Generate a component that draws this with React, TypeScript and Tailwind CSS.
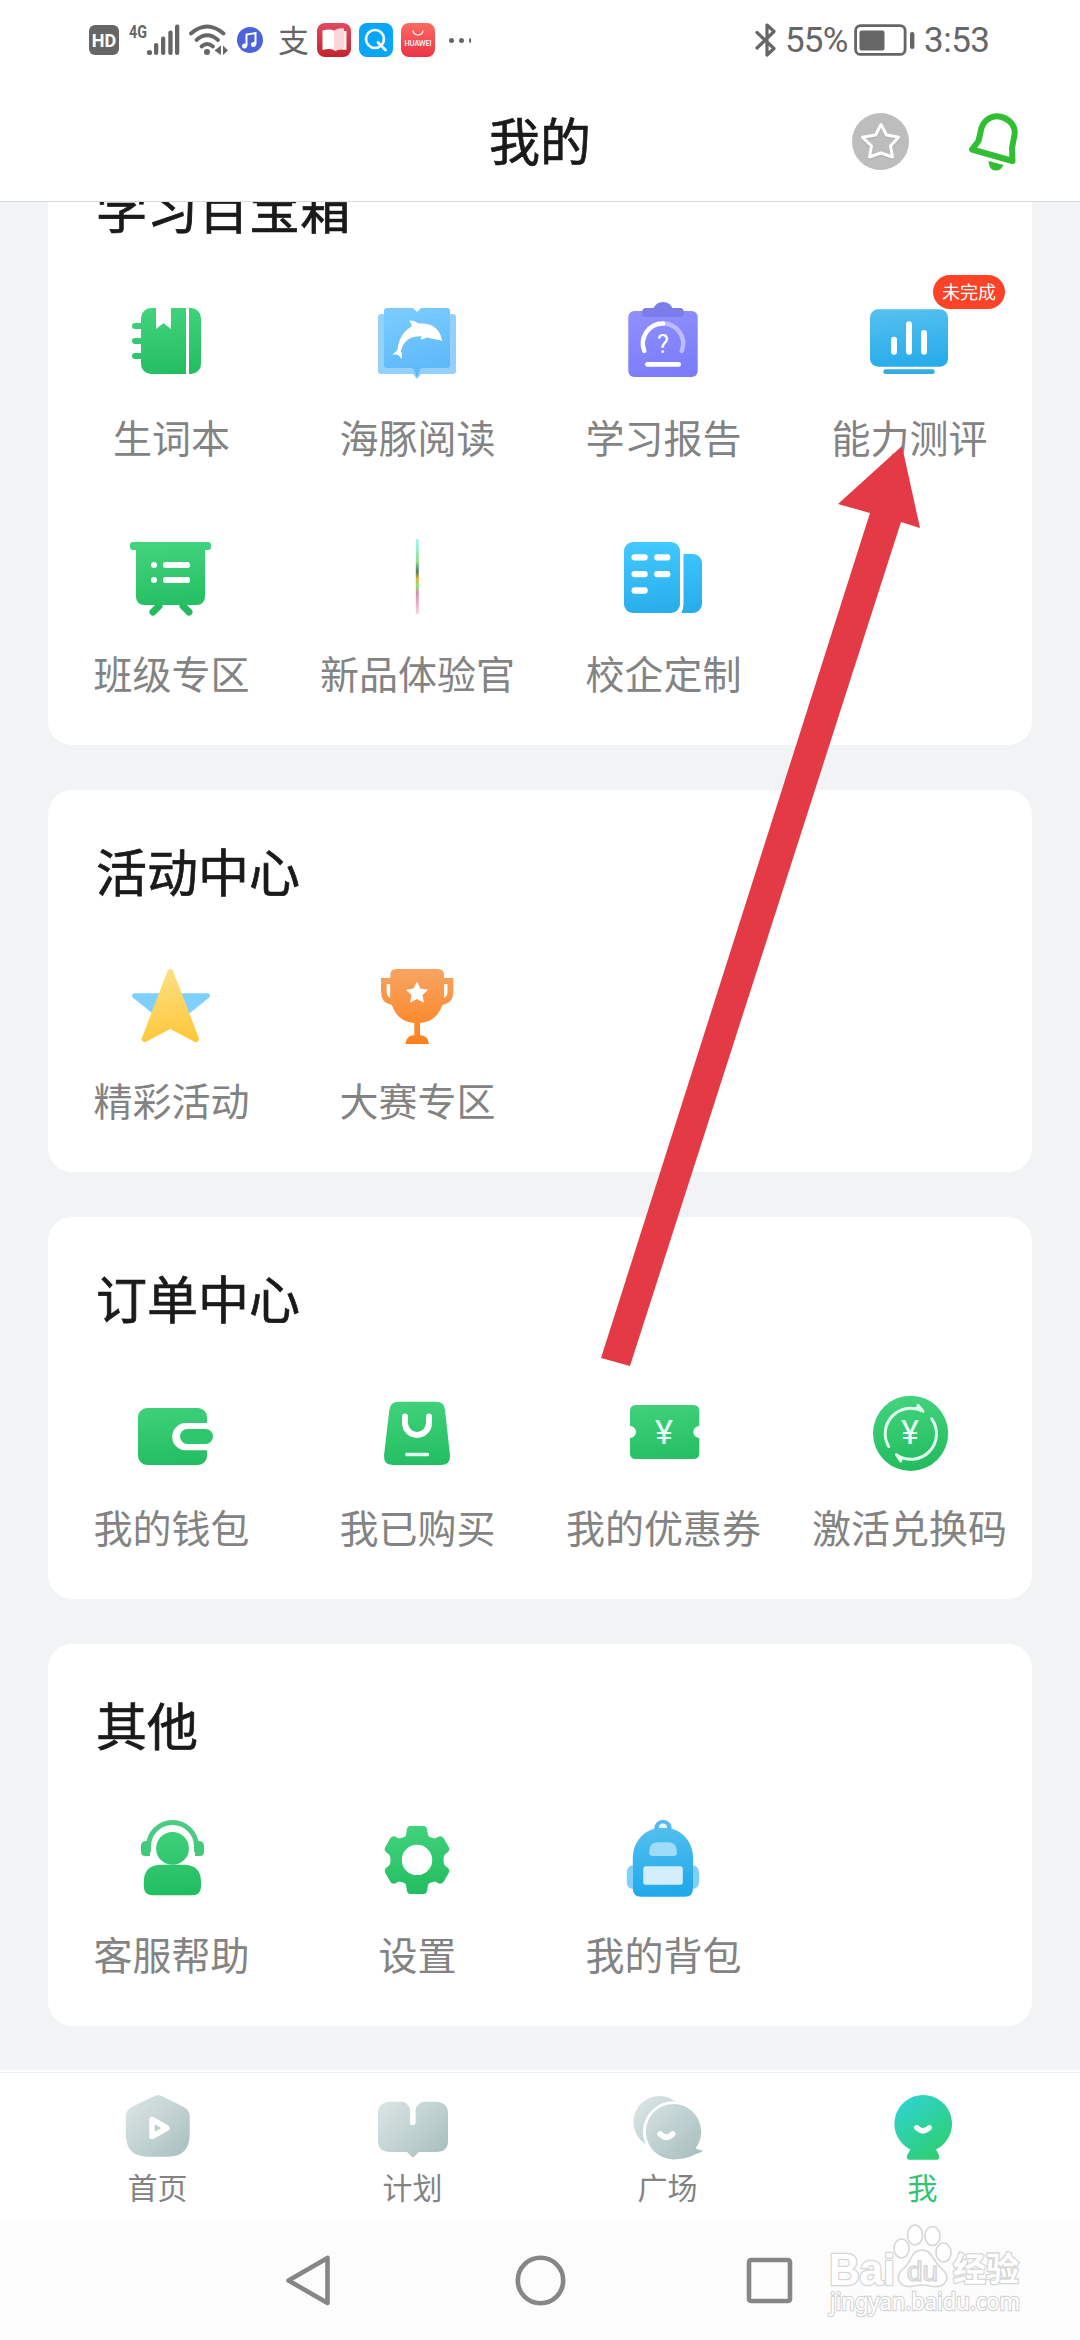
import type { ReactNode } from "react";

interface Item {
  label: string;
  icon: ReactNode;
  badge?: string;
}

const GREEN = "url(#green)";
const BLUE = "url(#blue)";
const MIST = "url(#mist)";

function Gradients() {
  return (
    <svg className="absolute w-0 h-0" aria-hidden="true">
      <defs>
        <linearGradient id="green" gradientUnits="userSpaceOnUse" x1="44" y1="12" x2="52" y2="84">
          <stop offset="0" stopColor="#42d37d" />
          <stop offset="1" stopColor="#22bc5f" />
        </linearGradient>
        <linearGradient id="blue" gradientUnits="userSpaceOnUse" x1="44" y1="12" x2="52" y2="80">
          <stop offset="0" stopColor="#54c0ef" />
          <stop offset="1" stopColor="#21a9ea" />
        </linearGradient>
        <linearGradient id="sky" gradientUnits="userSpaceOnUse" x1="44" y1="12" x2="50" y2="82">
          <stop offset="0" stopColor="#42c8ff" />
          <stop offset="1" stopColor="#28adea" />
        </linearGradient>
        <linearGradient id="page" gradientUnits="userSpaceOnUse" x1="40" y1="12" x2="56" y2="74">
          <stop offset="0" stopColor="#7accff" />
          <stop offset="1" stopColor="#5eb9fa" />
        </linearGradient>
        <linearGradient id="violet" gradientUnits="userSpaceOnUse" x1="40" y1="14" x2="56" y2="82">
          <stop offset="0" stopColor="#908fff" />
          <stop offset="1" stopColor="#7a7cf9" />
        </linearGradient>
        <linearGradient id="orange" gradientUnits="userSpaceOnUse" x1="48" y1="11" x2="48" y2="86">
          <stop offset="0" stopColor="#f6a462" />
          <stop offset="1" stopColor="#ff801b" />
        </linearGradient>
        <linearGradient id="yellow" gradientUnits="userSpaceOnUse" x1="40" y1="11" x2="52" y2="84">
          <stop offset="0" stopColor="#fbe184" />
          <stop offset="1" stopColor="#ffc63a" />
        </linearGradient>
        <linearGradient id="rainbow" x1="0" y1="0" x2="0" y2="1">
          <stop offset="0" stopColor="#a5f5f7" />
          <stop offset="0.3" stopColor="#8fe08f" />
          <stop offset="0.43" stopColor="#4d7a63" />
          <stop offset="0.54" stopColor="#e8b930" />
          <stop offset="0.62" stopColor="#86e66a" />
          <stop offset="0.72" stopColor="#d98aa5" />
          <stop offset="1" stopColor="#fbd3e0" />
        </linearGradient>
        <linearGradient id="mist" gradientUnits="userSpaceOnUse" x1="8" y1="8" x2="62" y2="62">
          <stop offset="0" stopColor="#dae4e4" />
          <stop offset="1" stopColor="#abc1c1" />
        </linearGradient>
        <linearGradient id="me" gradientUnits="userSpaceOnUse" x1="14" y1="12" x2="52" y2="60">
          <stop offset="0" stopColor="#2ed4cb" />
          <stop offset="1" stopColor="#2dcf75" />
        </linearGradient>
        <linearGradient id="reader" x1="0" y1="0" x2="0" y2="1">
          <stop offset="0" stopColor="#e04a5e" />
          <stop offset="1" stopColor="#c3242f" />
        </linearGradient>
        <linearGradient id="store" x1="0" y1="0" x2="0" y2="1">
          <stop offset="0" stopColor="#fb6a62" />
          <stop offset="1" stopColor="#ee3444" />
        </linearGradient>
      </defs>
    </svg>
  );
}

function Icon({ children }: { children: ReactNode }) {
  return (
    <svg className="w-24 h-24" viewBox="0 0 96 96" fill="none">
      {children}
    </svg>
  );
}

const toolItems: Item[] = [
  {
    label: "生词本",
    icon: (
      <Icon>
        <path fill={GREEN} d="M28 13H33V34L40.5 28.3L48 34V13H63V79H28A10 10 0 0 1 18 69V64H12A3 3 0 0 1 12 58H18V49H12A3 3 0 0 1 12 43H18V34H12A3 3 0 0 1 12 28H18V23A10 10 0 0 1 28 13Z" />
        <path fill={GREEN} d="M66 13H68A10 10 0 0 1 78 23V69A10 10 0 0 1 68 79H66Z" />
      </Icon>
    ),
  },
  {
    label: "海豚阅读",
    icon: (
      <Icon>
        <path fill="#95d0fd" d="M12 19H84A3 3 0 0 1 87 22V76A3 3 0 0 1 84 79H52L48 84L44 79H12A3 3 0 0 1 9 76V22A3 3 0 0 1 12 19Z" />
        <path fill="url(#page)" d="M18 13H44L48 17L52 13H78A3 3 0 0 1 81 16V70A3 3 0 0 1 78 73H54Q51 73 50.500 76L48 83L45.500 76Q45 73 42 73H18A3 3 0 0 1 15 70V16A3 3 0 0 1 18 13Z" />
        <path fill="#fff" d="M73 46C72 38 68 32 60 29.500C56 28.300 52 28.500 49 28.200C46 26 43 25.300 40.300 25.700C42 27.500 43 29 42.600 31.500C34 36 29.500 45 28.500 54.500C27 57 25 58 23 59.700C26 59.500 28 59.500 29.500 60.500C31 61.500 31.500 63 32.700 63.700C33.500 60.500 33 58.500 31.800 56.500C33 51 35.500 47 39 44.500C43 42 48 41 52.700 41.300L51.500 44.500C54.500 44.300 56.500 43.500 58 42.300C60 43 61 43.500 61.500 43.500C66 44.500 70 44 73 46Z" />
      </Icon>
    ),
  },
  {
    label: "学习报告",
    icon: (
      <Icon>
        <rect x="13.300" y="16" width="69.400" height="66" rx="6" fill="url(#violet)" />
        <path fill="#7c7cea" d="M31 13H38.500A10.500 10.500 0 0 1 57.500 13H65Q69 13 69 17.500T65 22H31Q27 22 27 17.500T31 13Z" />
        <path d="M66.700 56A20 20 0 0 0 48 28.600" stroke="#bcbcfe" strokeWidth="4.500" strokeLinecap="round" />
        <path d="M48 28.600A20 20 0 0 0 29.300 56" stroke="#fff" strokeWidth="4.500" strokeLinecap="round" />
        <text x="48" y="58" textAnchor="middle" fill="#fff" fontSize="25" fontFamily="Roboto, sans-serif">?</text>
        <rect x="30" y="67" width="36" height="4.800" rx="2.400" fill="#fff" />
      </Icon>
    ),
  },
  {
    label: "能力测评",
    badge: "未完成",
    icon: (
      <Icon>
        <rect x="9" y="14.300" width="78" height="57.400" rx="8" fill={BLUE} />
        <rect x="30" y="41.700" width="6" height="18" rx="3" fill="#fff" />
        <rect x="45" y="26.300" width="6" height="33.400" rx="3" fill="#fff" />
        <rect x="60" y="35" width="6" height="24.700" rx="3" fill="#fff" />
        <rect x="22.300" y="74.300" width="51.400" height="4.700" rx="2.300" fill="#35abe2" />
      </Icon>
    ),
  },
  {
    label: "班级专区",
    icon: (
      <Icon>
        <path d="M36 75L30 81M60 75L66 81" stroke="#22bc5f" strokeWidth="7" strokeLinecap="round" />
        <path fill={GREEN} d="M10 11H85A3 3 0 0 1 88 14V16A3 3 0 0 1 85 19H82V66A8 8 0 0 1 74 74H21A8 8 0 0 1 13 66V19H10A3 3 0 0 1 7 16V14A3 3 0 0 1 10 11Z" />
        <g fill="#fff">
          <rect x="28" y="31" width="6" height="6" rx="3" />
          <rect x="40" y="31" width="27" height="6" rx="2.500" />
          <rect x="28" y="46" width="6" height="6" rx="3" />
          <rect x="40" y="46" width="27" height="6" rx="2.500" />
        </g>
      </Icon>
    ),
  },
  {
    label: "新品体验官",
    icon: (
      <Icon>
        <rect x="46.800" y="8" width="3" height="75" fill="url(#rainbow)" />
      </Icon>
    ),
  },
  {
    label: "校企定制",
    icon: (
      <Icon>
        <rect x="9" y="11" width="56" height="71" rx="9" fill="url(#sky)" />
        <path fill="url(#sky)" d="M68.500 23H78A9 9 0 0 1 87 32V73A9 9 0 0 1 78 82H66.300Q68.500 78 68.500 73Z" />
        <g fill="#fff">
          <rect x="16.500" y="23.200" width="16.200" height="6.400" rx="3" />
          <rect x="39.200" y="23.200" width="16.200" height="6.400" rx="3" />
          <rect x="16.500" y="39.900" width="16.200" height="6.400" rx="3" />
          <rect x="39.200" y="39.900" width="16.200" height="6.400" rx="3" />
          <rect x="16.500" y="56.300" width="16.200" height="6.400" rx="3" />
        </g>
      </Icon>
    ),
  },
];

const activityItems: Item[] = [
  {
    label: "精彩活动",
    icon: (
      <Icon>
        <path d="M11.500 37.800H84.500L66 52.500H30Z" fill="#7fcfff" stroke="#7fcfff" strokeWidth="5" strokeLinejoin="round" />
        <path d="M47.300 14L21.700 81L47.300 67.500L73 81Z" fill="url(#yellow)" stroke="url(#yellow)" strokeWidth="6" strokeLinejoin="round" />
      </Icon>
    ),
  },
  {
    label: "大赛专区",
    icon: (
      <Icon>
        <path fill="url(#orange)" fillRule="evenodd" d="M27 11H69Q75 11 75 17V20H84.300V34Q84.300 45 73.500 47Q67 64 51 65V77.300H52Q59 78 60 86H36.300Q37.300 78 44.300 77.300H45.300V65Q29 64 22.800 47Q12 45 12 34V20H21.300V17Q21.300 11 27 11ZM17.700 26V34Q17.700 38 21.200 40V26ZM75 26V40Q78.500 38 78.500 34V26Z" />
        <path fill="#fff" d="M48 23.500L51.400 30.600L59.200 31.700L53.500 37.100L54.900 44.800L48 41.100L41.100 44.800L42.500 37.100L36.800 31.700L44.600 30.600Z" />
      </Icon>
    ),
  },
];

const orderItems: Item[] = [
  {
    label: "我的钱包",
    icon: (
      <Icon>
        <path fill={GREEN} d="M24 23H75A9 9 0 0 1 84 32V38H61.700A13.700 13.700 0 0 0 61.700 65.300H84V71A9 9 0 0 1 75 80H24A9 9 0 0 1 15 71V32A9 9 0 0 1 24 23Z" />
        <rect x="57" y="44" width="33" height="15" rx="7.500" fill="#2fc76d" />
      </Icon>
    ),
  },
  {
    label: "我已购买",
    icon: (
      <Icon>
        <path fill={GREEN} d="M29.500 16.700H67Q75.300 16.700 76 25L81 70.500Q81.500 80 71.500 80H24.500Q14.500 80 15 70.500L20.300 25Q21.300 16.700 29.500 16.700Z" />
        <path d="M36 31.500V38A12 12 0 0 0 60 38V31.500" stroke="#fff" strokeWidth="6" strokeLinecap="round" />
        <rect x="36.300" y="67.700" width="23.700" height="3.600" rx="1" fill="#e2fbec" />
      </Icon>
    ),
  },
  {
    label: "我的优惠券",
    icon: (
      <Icon>
        <path fill={GREEN} d="M21 20H78.300Q84.300 20 84.300 26V41A6 6 0 0 0 84.300 53V68Q84.300 74 78.300 74H21Q15 74 15 68V53A6 6 0 0 0 15 41V26Q15 20 21 20Z" />
        <text x="49" y="59" textAnchor="middle" fill="#e9fff2" fontSize="33" textLength="18" lengthAdjust="spacingAndGlyphs" fontFamily="Roboto, sans-serif">¥</text>
      </Icon>
    ),
  },
  {
    label: "激活兑换码",
    icon: (
      <Icon>
        <circle cx="49.600" cy="48.300" r="37.600" fill={GREEN} />
        <g stroke="#e2fdec" strokeWidth="3" strokeLinecap="round" strokeLinejoin="round">
          <path d="M27.700 61.500A25.500 25.500 0 0 1 62 26.300L57 20.300" />
          <path d="M70.700 33.800A25.500 25.500 0 0 1 35.500 69.700L39.700 76" />
        </g>
        <path d="M57 19.500L63 26.500L54 23Z" fill="#e2fdec" />
        <path d="M39.700 76L35 69.300L43 73Z" fill="#e2fdec" />
        <text x="49" y="59" textAnchor="middle" fill="#e9fff2" fontSize="33" textLength="18" lengthAdjust="spacingAndGlyphs" fontFamily="Roboto, sans-serif">¥</text>
      </Icon>
    ),
  },
];

const otherItems: Item[] = [
  {
    label: "客服帮助",
    icon: (
      <Icon>
        <path d="M25.500 40V34.500A24 24 0 0 1 73.500 34.500V40" stroke="#4ccb82" strokeWidth="5" />
        <path fill="#42c97b" d="M23.500 29Q26.500 29 27 31V44H22Q18 44 18 40V34Q18 29 23.500 29ZM75.500 29Q72.500 29 72 31V44H77Q81 44 81 40V34Q81 29 75.500 29Z" />
        <circle cx="49.500" cy="36.400" r="16.400" fill={GREEN} />
        <path fill={GREEN} d="M37 52.700H62Q78 53.500 78 70V74.500Q78 83.300 69 83.300H30Q20.800 83.300 20.800 74.500V70Q20.800 53.500 37 52.700Z" />
      </Icon>
    ),
  },
  {
    label: "设置",
    icon: (
      <Icon>
        <path
          fill={GREEN}
          fillRule="evenodd"
          d="M41.500 14H54.500Q57.500 14 58 17L59 23Q59.300 24.700 62 25.500L66 26.500L70 24.500Q72.500 23.500 74.500 26L80 35.500Q81.200 38 79 40L75.500 43Q74.500 44 74.500 48T75.500 53L79 56Q81.200 58 80 60.500L74.500 70Q72.500 72.500 70 71.500L66 69.500L62 70.500Q59.300 71.300 59 73L58 79Q57.500 82 54.500 82H41.500Q38.500 82 38 79L37 73Q36.700 71.300 34 70.500L30 69.500L26 71.500Q23.500 72.500 21.500 70L16 60.500Q14.800 58 17 56L20.500 53Q21.500 52 21.500 48T20.500 43L17 40Q14.800 38 16 35.500L21.500 26Q23.500 23.500 26 24.500L30 26.500L34 25.500Q36.700 24.700 37 23L38 17Q38.500 14 41.500 14ZM48 32.700A15.200 15.200 0 1 0 48 63.100A15.200 15.200 0 1 0 48 32.700Z"
        />
      </Icon>
    ),
  },
  {
    label: "我的背包",
    icon: (
      <Icon>
        <path fill="#7fd0fa" d="M17.800 53.300Q11.800 54 11.800 61V70Q11.800 76 17.800 77ZM78 53.300Q84 54 84 61V70Q84 76 78 77Z" />
        <circle cx="48" cy="16.500" r="6.500" stroke="#54b9ee" strokeWidth="4.500" />
        <path fill={BLUE} d="M48 15.700C66 15.700 78 29 78 46V76Q78 84.700 70 84.700H26Q17.800 84.700 17.800 76V46C17.800 29 30 15.700 48 15.700Z" />
        <path d="M44 15.500A4 4 0 0 1 52 15.500Q48 16.500 44 15.500Z" fill="#e8f7ff" />
        <path fill="#9edcf8" d="M42 30.300H54Q61.800 31 61.800 39V41Q61.800 44 58.800 44H37.300Q34.300 44 34.300 41V39Q34.300 31 42 30.300Z" />
        <rect x="28.300" y="54.300" width="39.500" height="18.400" rx="2.500" fill="#d3eefb" />
      </Icon>
    ),
  },
];

function Section({ title, items }: { title: string; items: Item[] }) {
  return (
    <section className="bg-white rounded-3xl pt-11 pb-[49px]">
      <h2 className="pl-12 text-[51px] leading-[72px] text-[#1a1a1a] [-webkit-text-stroke:0.7px_#1a1a1a]">{title}</h2>
      <div className="mt-[52px] grid grid-cols-4 gap-y-[71px]">
        {items.map((item) => (
          <div key={item.label} className="relative flex flex-col items-center">
            {item.icon}
            <span className="mt-[21px] pl-px text-[39px] leading-[48px] whitespace-nowrap text-[#838383]">{item.label}</span>
            {item.badge && (
              <span className="absolute left-[147px] -top-5 w-[72px] h-[34px] rounded-full bg-[#fc4327] text-white text-[18px] leading-[32px] text-center">
                {item.badge}
              </span>
            )}
          </div>
        ))}
      </div>
    </section>
  );
}

function StatusBar() {
  return (
    <div className="flex items-center h-20 pl-[89px] pr-[88px] text-[#666]">
      <span className="w-[30px] h-[30px] rounded-md bg-[#666] text-white text-[18px] leading-[31px] font-bold text-center font-[Roboto,sans-serif]">HD</span>
      <svg className="ml-2 w-[54px] h-9" viewBox="0 0 54 36" fill="currentColor">
        <text x="2" y="16" fontSize="18" fontWeight="700" textLength="18" lengthAdjust="spacingAndGlyphs" fontFamily="Roboto, sans-serif">4G</text>
        <circle cx="22.500" cy="30.500" r="2.600" />
        <rect x="27" y="21" width="4.300" height="12" rx="2" />
        <rect x="34" y="14.500" width="4.300" height="18.500" rx="2" />
        <rect x="41.300" y="8.500" width="4.300" height="24.500" rx="2" />
        <rect x="48" y="2.500" width="4.300" height="30.500" rx="2" />
      </svg>
      <svg className="ml-2 w-10 h-9" viewBox="0 0 40 36" fill="none" stroke="currentColor" strokeWidth="3.800" strokeLinecap="round">
        <path d="M2 11.500Q18 -2.500 34.500 11.500" />
        <path d="M7.500 18Q18 8.500 29 18" />
        <path d="M12.500 24.500Q18 19.500 24 24.500" />
        <circle cx="18" cy="30" r="3" fill="currentColor" stroke="none" />
        <path d="M32 23.500V33L25.500 28.500ZM34 23.500V33L39 28.500Z" fill="currentColor" stroke="none" />
      </svg>
      <svg className="ml-2 w-[26px] h-[26px]" viewBox="0 0 26 26" fill="none">
        <circle cx="13" cy="13" r="13" fill="#4c64d8" />
        <path d="M9.500 19V7.500L18.500 6V17.500" stroke="#fff" strokeWidth="2" />
        <circle cx="7.500" cy="19" r="2.500" fill="#fff" />
        <circle cx="16.500" cy="17.500" r="2.500" fill="#fff" />
      </svg>
      <span className="ml-[15px] -mt-0.5 w-[31px] text-[31px] leading-9">支</span>
      <svg className="ml-2 w-[34px] h-[34px]" viewBox="0 0 34 34">
        <rect width="34" height="34" rx="8" fill="url(#reader)" />
        <path fill="#fff" d="M5.500 7.500Q12 5.500 17 7.500V27Q12 25 5.500 27Z" />
        <path fill="#ffd5da" d="M17 7.500Q22 4.500 27 5.500V25Q22 25 17 28Z" />
        <path fill="#ffeef0" d="M27 8H29.500V27Q23 25.500 17 28Q22 24.500 27 25Z" />
      </svg>
      <svg className="ml-2 w-[34px] h-[34px]" viewBox="0 0 34 34" fill="none">
        <rect width="34" height="34" rx="8" fill="#06a6fb" />
        <circle cx="16" cy="16" r="9" stroke="#fff" strokeWidth="2.600" />
        <path d="M19 19.500L26.500 27" stroke="#fff" strokeWidth="2.800" strokeLinecap="round" />
      </svg>
      <svg className="ml-2 w-[34px] h-[34px]" viewBox="0 0 34 34" fill="none">
        <rect width="34" height="34" rx="8" fill="url(#store)" />
        <path d="M12 7.500A5 4.500 0 0 0 22 7.500" stroke="#fff" strokeWidth="1.200" />
        <text x="17" y="22.500" textAnchor="middle" fill="#fff" fontSize="7" fontWeight="700" textLength="27" lengthAdjust="spacingAndGlyphs" fontFamily="Lato, sans-serif">HUAWEI</text>
      </svg>
      <span className="ml-3.5 flex gap-[5px]">
        <i className="w-[5px] h-[5px] rounded-full bg-[#666]" />
        <i className="w-[5px] h-[5px] rounded-full bg-[#666]" />
        <i className="w-[2px] h-[5px] rounded-l-full bg-[#666]" />
      </span>

      <svg className="ml-auto w-[22px] h-9" viewBox="0 0 22 36" fill="none" stroke="currentColor" strokeWidth="3.200" strokeLinecap="round" strokeLinejoin="round">
        <path d="M2 10.500L19 26.500L12 33V3L19 9.500L2 26" />
      </svg>
      <span className="ml-2 mt-0.5 w-[69px] text-[35px] leading-10 tracking-[-0.8px] font-[Roboto,sans-serif]">55%</span>
      <svg className="w-[62px] h-8" viewBox="0 0 62 32" fill="none">
        <rect x="1.600" y="1.600" width="49.500" height="28.800" rx="5" stroke="currentColor" strokeWidth="2.800" />
        <rect x="5.500" y="6.500" width="25" height="20" rx="2" fill="currentColor" />
        <rect x="56" y="8" width="4.400" height="17" rx="2" fill="currentColor" />
      </svg>
      <span className="ml-2 mt-0.5 w-[68px] text-[35px] leading-10 tracking-[-0.5px] font-[Roboto,sans-serif]">3:53</span>
    </div>
  );
}

function Header() {
  return (
    <div className="relative flex h-[121px] items-center justify-center">
      <h1 className="-mt-1 text-[51px] leading-[72px] text-[#1a1a1a] [-webkit-text-stroke:0.7px_#1a1a1a]">我的</h1>
      <div className="absolute right-[54px] top-[31px] flex gap-[56px]">
        <svg className="w-[60px] h-[60px]" viewBox="0 0 60 60" fill="none">
          <circle cx="30.500" cy="30.500" r="28.500" fill="#bdbdbd" />
          <path d="M31 13.500L36.400 24L48.500 26.300L40.500 35L42.500 46L31 42L19.500 46L21.500 35L12.500 26.300L25.600 24Z" stroke="#9a9a9a" strokeOpacity="0.400" strokeWidth="3.500" strokeLinejoin="round" transform="translate(0 1.200)" />
          <path d="M31 13.500L36.400 24L48.500 26.300L40.500 35L42.500 46L31 42L19.500 46L21.500 35L12.500 26.300L25.600 24Z" stroke="#fff" strokeWidth="3" strokeLinejoin="round" />
        </svg>
        <svg className="w-[60px] h-[60px]" viewBox="0 0 60 60" fill="none">
          <path d="M6 38.500L12.500 30L15.200 18C18 8 27 3.500 35.500 6C44 8.500 50 15 48.500 24L46 37L46.500 50Z" stroke="#32be32" strokeWidth="6" strokeLinejoin="round" />
          <path d="M22.500 50L37.500 54Q35 60 29 59.500T22.500 50Z" fill="#32be32" />
        </svg>
      </div>
    </div>
  );
}

function TabIcon({ children }: { children: ReactNode }) {
  return (
    <svg className="w-[72px] h-[72px]" viewBox="0 0 72 72" fill="none">
      {children}
    </svg>
  );
}

const tabs = [
  {
    label: "首页",
    icon: (
      <TabIcon>
        <path fill={MIST} d="M31.500 4.500Q36 2 40.500 4.500L61 14.500Q67.700 18 67.700 25V42Q67.700 64.700 46 64.700H26Q3.800 64.700 3.800 42V25Q3.800 18 10.500 14.500Z" />
        <path d="M30 27.500V44.500L45 36Z" fill="#bccfcf" stroke="#fff" strokeWidth="5.500" strokeLinejoin="round" />
      </TabIcon>
    ),
  },
  {
    label: "计划",
    icon: (
      <TabIcon>
        <path fill={MIST} d="M13 9.700H25Q28 9.700 29.500 11.500L33 16V30.500A2.800 2.800 0 0 0 38.600 30.500V16L42.500 11.500Q44 9.700 47 9.700H59Q71 10.500 71 21V49Q71 60 59 60H41.700L37.500 64.500Q36 66 34.500 64.500L30 60H13Q1 60 1 49V21Q1 10.500 13 9.700Z" />
      </TabIcon>
    ),
  },
  {
    label: "广场",
    icon: (
      <TabIcon>
        <circle cx="27.400" cy="30" r="26" fill={MIST} />
        <circle cx="41.500" cy="39.700" r="30.500" fill="#fff" />
        <path fill={MIST} d="M41.500 12A27.700 27.700 0 0 1 63.500 56.500Q67 58 71 58.700Q69 60.500 64 62Q54 67.500 41.500 67.400A27.700 27.700 0 0 1 41.500 12Z" />
        <path d="M28.300 42Q34.500 48.500 40.700 42" stroke="#fff" strokeWidth="5.800" strokeLinecap="round" />
      </TabIcon>
    ),
  },
  {
    label: "我",
    active: true,
    icon: (
      <TabIcon>
        <path fill="url(#me)" d="M36.200 3A28.800 28.800 0 0 1 49 57.600L52 63.500Q53 67.700 49.500 67.700H22.500Q19 67.700 20 63.500L23.400 57.600A28.800 28.800 0 0 1 36.200 3Z" />
        <path d="M29.700 35.700Q36 42 42.400 35.700" stroke="#fff" strokeWidth="5.300" strokeLinecap="round" />
      </TabIcon>
    ),
  },
];

function TabBar() {
  return (
    <nav className="h-[150px] pt-0.5 bg-white">
      <div className="flex px-[30px] pt-[19px] border-t border-[#f0f1f2]">
        {tabs.map((tab) => (
          <div key={tab.label} className="flex flex-1 flex-col items-center">
            {tab.icon}
            <span className={tab.active ? "mt-1 text-[30px] leading-9 text-[#35c373]" : "mt-1 text-[30px] leading-9 text-[#838383]"}>
              {tab.label}
            </span>
          </div>
        ))}
      </div>
    </nav>
  );
}

function SystemNav() {
  return (
    <div className="relative flex h-[120px] items-center justify-center gap-[180px] bg-[#fcfcfc]">
      <svg className="w-[51px] h-[51px]" viewBox="0 0 51 51" fill="none" stroke="#868686" strokeWidth="4.600" strokeLinejoin="round">
        <path d="M43.500 3V48L4.500 25.500Z" />
      </svg>
      <svg className="w-[51px] h-[51px]" viewBox="0 0 51 51" fill="none" stroke="#868686" strokeWidth="4.600">
        <circle cx="25.500" cy="25.500" r="22.700" />
      </svg>
      <svg className="w-[51px] h-[51px]" viewBox="0 0 51 51" fill="none" stroke="#868686" strokeWidth="4.600">
        <rect x="3" y="5" width="41" height="41" rx="2" />
      </svg>
      <Watermark />
    </div>
  );
}

function Watermark() {
  return (
    <svg className="absolute left-[820px] top-0 w-[210px] h-[104px]" viewBox="0 0 210 104" fill="#fff" stroke="#d6d6d6" strokeWidth="1.600">
      <g fontWeight="700" strokeLinejoin="round" paintOrder="stroke">
        <text x="9" y="65" fontSize="44" textLength="66" lengthAdjust="spacingAndGlyphs" strokeWidth="2.600" fontFamily="'Liberation Sans', sans-serif">Bai</text>
        <text x="133" y="61" fontSize="33" textLength="66" lengthAdjust="spacingAndGlyphs" strokeWidth="2.600" fontFamily="'Noto Sans CJK SC', sans-serif">经验</text>
      </g>
      <ellipse cx="81.500" cy="28.500" rx="7.500" ry="9.500" />
      <ellipse cx="95" cy="15" rx="7.500" ry="10" />
      <ellipse cx="112.500" cy="16" rx="7.500" ry="9.500" />
      <ellipse cx="123.500" cy="32.500" rx="7.500" ry="9.500" />
      <path d="M102 30Q109 30 113 38Q118 46 124 51Q130 58 124 64Q119 68 110 66Q102 64 94 66Q84 68 79.500 62Q76 55 83 49Q88 45 91 38Q95 30 102 30Z" />
      <text x="87" y="61" fontSize="28" textLength="31" lengthAdjust="spacingAndGlyphs" fontFamily="'Liberation Sans', sans-serif">du</text>
      <text x="10" y="90" fontSize="23" textLength="190" lengthAdjust="spacingAndGlyphs" strokeWidth="2.400" paintOrder="stroke" fontFamily="'Noto Sans', sans-serif">jingyan.baidu.com</text>
    </svg>
  );
}

export default function App() {
  return (
    <div className="relative flex flex-col w-[1080px] h-[2340px] overflow-hidden bg-[#f2f3f5] select-none font-['Noto_Sans_CJK_SC',sans-serif]">
      <Gradients />

      <header className="bg-white h-[202px] shrink-0 border-b border-[#d8d9da]">
        <StatusBar />
        <Header />
      </header>

      {/* Scrolled so the first card's title sits half under the header */}
      <main className="flex-1 min-h-0 overflow-hidden px-12">
        <div className="-mt-[75px] flex flex-col gap-[45px]">
          <Section title="学习百宝箱" items={toolItems} />
          <Section title="活动中心" items={activityItems} />
          <Section title="订单中心" items={orderItems} />
          <Section title="其他" items={otherItems} />
        </div>
      </main>

      <TabBar />
      <SystemNav />

      {/* Pointer to 能力测评 */}
      <svg className="absolute left-[590px] top-[440px] w-[340px] h-[940px]" viewBox="590 440 340 940">
        <path d="M902 446L920 528L901 522L630 1366L601 1358L870 513L838 504Z" fill="#e43a45" />
      </svg>
    </div>
  );
}
